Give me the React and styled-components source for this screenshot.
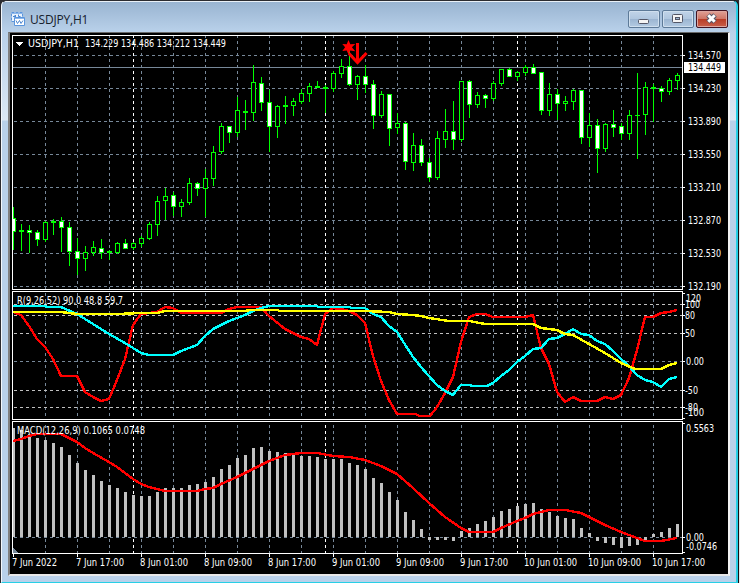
import React from "react";
import styled, { createGlobalStyle } from "styled-components";

const color = {
  grid: "#778899",
  level: "#c0c0c0",
  up: "#00ff00",
  red: "#ff0000",
  cyan: "#00ffff",
  yellow: "#ffff00",
  frame: "#b9d1ea",
};

const GlobalStyle = createGlobalStyle`
  * {
    box-sizing: border-box;
  }
  body {
    margin: 0;
    background: linear-gradient(90deg, #2b2b30 739px, #e4e8ec 739px);
    overflow: hidden;
  }
`;

const Window = styled.div`
  width: 737px;
  height: 583px;
  margin-left: 1px;
  display: flex;
  flex-direction: column;
  background: ${color.frame};
  border: solid;
  border-width: 1px 2px 1px 1px;
  border-color: #2b2b30 #27cfe6 #27cfe6 #f4f8fc;
  border-radius: 6px 6px 0 0;
  box-shadow: 1px 0 0 #101014;
  overflow: hidden;
`;

const TitleBar = styled.header`
  height: 31px;
  flex: none;
  display: flex;
  align-items: flex-start;
  padding: 9px 8px 0 9px;
  border-top: 1px solid #e9f0f7;
  background: linear-gradient(#99b4d1, #b9d1ea);
`;

const WindowTitle = styled.h1`
  flex: 1;
  margin: 0 0 0 4px;
  font: 400 12px/18px "Open Sans", "Noto Sans", sans-serif;
  letter-spacing: -0.2px;
  color: #16202c;
`;

const Buttons = styled.div`
  display: flex;
  gap: 2px;
  margin-top: -1px;
`;

const WindowButton = styled.button`
  width: 32px;
  height: 18px;
  padding: 0;
  display: flex;
  align-items: center;
  justify-content: center;
  border: 1px solid ${(p) => (p.$close ? "#431422" : "#5d7a98")};
  border-radius: 2px;
  box-shadow: inset 0 0 0 1px ${(p) => (p.$close ? "#dda69f" : "#cfdfee")};
  background: ${(p) =>
    p.$close
      ? "linear-gradient(#e0a196, #cf7767 48%, #b83c25 50%, #c9604b)"
      : "linear-gradient(#c1d4e8, #b0c7df 48%, #9bb5d1 50%, #b3cae2)"};
`;

const Body = styled.div`
  flex: 1;
  display: flex;
  padding: 0 6px 6px 6px;
  background: linear-gradient(
      #b9d1ea 0,
      #dce8f4 88px,
      #b9d1ea 89px,
      #b9d1ea 100%
    );
`;

const Client = styled.main`
  flex: 1;
  display: flex;
  flex-direction: column;
  border: solid;
  border-width: 1px 2px 2px 2px;
  border-color: #696969 #f4f4f4 #e8e8e8 #808080;
  background: #000;
`;

const Pane = styled.svg`
  display: block;
  flex: none;
  width: 718px;
  height: ${(p) => p.$height}px;
  overflow: visible;
  shape-rendering: crispEdges;
`;

const Label = styled.text`
  font: 10.5px "DejaVu Sans Condensed", "DejaVu Sans", sans-serif;
  font-stretch: condensed;
  fill: ${(p) => p.$fill || "#fff"};
`;

// high, body top, body bottom, low, kind (0 hollow, 1 filled)
const candles = [
  [207, 218, 231, 249, 1], [224, 230, 231, 250, 0], [225, 230, 232, 252, 1],
  [230, 232, 239, 245, 1], [221, 222, 239, 241, 0], [219, 221, 222, 234, 0],
  [217, 221, 227, 251, 1], [222, 227, 251, 265, 1], [238, 251, 258, 274, 1],
  [246, 252, 258, 270, 0], [241, 247, 252, 255, 0], [239, 248, 252, 258, 1],
  [250, 251, 252, 259, 0], [242, 243, 252, 253, 0], [239, 243, 248, 248, 1],
  [242, 243, 247, 249, 0], [236, 238, 243, 246, 0], [222, 224, 238, 239, 0],
  [196, 201, 224, 235, 0], [188, 196, 200, 219, 0], [192, 195, 206, 215, 1],
  [199, 202, 206, 216, 0], [178, 183, 202, 204, 0], [182, 183, 188, 195, 1],
  [169, 178, 188, 216, 0], [146, 152, 178, 185, 0], [123, 126, 151, 153, 0],
  [126, 126, 132, 142, 1], [97, 110, 132, 136, 0], [100, 111, 112, 129, 0],
  [65, 82, 112, 120, 0], [77, 83, 102, 110, 1], [90, 102, 126, 151, 1],
  [105, 106, 126, 137, 0], [96, 105, 106, 123, 0], [98, 101, 105, 115, 0],
  [89, 93, 101, 103, 0], [83, 86, 93, 101, 0], [81, 86, 87, 87, 0],
  [85, 87, 88, 112, 0], [71, 73, 88, 91, 0], [59, 66, 73, 77, 0],
  [50, 66, 84, 85, 1], [75, 76, 84, 99, 0], [65, 76, 84, 92, 1],
  [80, 84, 115, 128, 1], [91, 94, 115, 117, 0], [94, 94, 128, 145, 1],
  [113, 123, 127, 133, 0], [122, 123, 161, 169, 1], [133, 145, 162, 170, 0],
  [139, 145, 162, 165, 1], [158, 162, 177, 181, 1], [131, 138, 177, 179, 0],
  [109, 131, 139, 147, 0], [101, 131, 139, 149, 1], [81, 81, 139, 141, 0],
  [80, 81, 104, 117, 1], [92, 95, 104, 107, 0], [94, 95, 98, 107, 1],
  [81, 83, 98, 100, 0], [69, 69, 83, 85, 0], [68, 69, 76, 76, 1],
  [71, 72, 76, 80, 0], [65, 67, 72, 75, 0], [64, 67, 73, 73, 1],
  [72, 72, 110, 114, 1], [83, 94, 110, 115, 0], [89, 94, 103, 119, 1],
  [96, 101, 103, 110, 0], [89, 90, 101, 109, 0], [90, 90, 137, 143, 1],
  [113, 125, 137, 146, 0], [119, 125, 148, 172, 1], [123, 124, 148, 151, 0],
  [110, 124, 127, 136, 1], [123, 126, 133, 139, 1], [110, 115, 133, 139, 0],
  [73, 115, 115, 158, 0], [82, 87, 114, 134, 0], [84, 87, 88, 121, 0],
  [86, 88, 91, 101, 1], [78, 80, 91, 94, 0], [73, 75, 80, 89, 0],
];

const macd = [
  428, 430, 434, 438, 440, 443, 447, 455, 463, 470, 475, 481, 485, 488, 492,
  495, 496, 496, 492, 488, 488, 488, 485, 484, 482, 477, 469, 465, 458, 455,
  448, 447, 451, 452, 453, 454, 456, 456, 457, 459, 459, 459, 463, 465, 469,
  478, 483, 492, 500, 512, 520, 529, 540, 540, 540, 541, 531, 528, 524, 521,
  517, 511, 509, 506, 504, 503, 509, 512, 516, 518, 519, 528, 533, 541, 543,
  545, 548, 546, 545, 540, 534, 532, 528, 524,
];

const fast =
  "13,312 21,315 29,326 37,339 45,347 53,359 61,376 77,376 85,392 93,397 101,401 109,399 117,380 125,359 133,325 141,314 157,312 165,307 173,308 181,313 221,313 229,309 237,307 261,307 269,316 285,329 301,337 309,339 317,345 325,314 333,308 341,309 349,311 357,315 365,323 373,356 381,381 389,400 397,414 416,414 419,416 430,416 437,407 445,393 453,377 461,342 469,317 477,314 485,314 493,317 525,317 533,315 541,348 549,364 557,392 565,402 573,397 581,401 597,401 605,397 613,399 621,395 629,378 637,350 645,317 653,317 661,313 669,312 677,310";
const middle =
  "13,306 45,306 47,307 61,307 77,314 93,324 109,334 125,343 133,348 141,353 149,355 173,355 181,351 197,345 205,336 213,329 229,321 245,315 253,311 261,308 269,306 316,306 319,307 349,307 352,308 365,308 373,314 381,317 389,326 397,332 413,357 421,367 437,385 445,391 453,395 461,385 469,385 473,386 487,386 493,383 501,376 509,370 517,362 525,356 533,349 541,348 549,339 557,338 565,334 573,329 581,334 589,335 597,341 605,344 613,351 621,359 629,366 637,375 645,380 653,382 661,387 669,379 677,377";
const slow =
  "13,312 61,312 77,314 117,314 141,313 157,313 165,311 245,311 250,310 277,310 280,311 365,311 389,312 397,314 413,315 421,316 429,318 449,321 469,321 485,324 533,324 541,328 557,330 565,334 573,335 589,344 605,353 621,363 635,369 661,369 669,365 677,363";
const signal =
  "13,441 21,439 29,436 37,434 61,434 69,438 77,442 85,448 93,453 109,462 117,467 125,473 133,479 141,484 149,487 157,489 165,491 197,491 205,489 213,488 221,484 237,477 245,473 269,461 285,455 301,453 317,453 333,456 349,457 365,460 381,466 397,474 413,488 429,503 445,517 461,528 469,532 493,532 501,528 517,521 525,518 533,514 541,512 549,510 565,510 581,513 589,517 605,525 621,532 637,538 645,541 661,541 677,538";

const columns = Array.from({ length: 20 }, (_, i) => 45 + i * 32);
const days = [133, 325, 517];
const dates = [
  ["7 Jun 2022", 12, 45], ["7 Jun 17:00", 76, 48], ["8 Jun 01:00", 140, 48],
  ["8 Jun 09:00", 204, 48], ["8 Jun 17:00", 268, 48], ["9 Jun 01:00", 332, 48],
  ["9 Jun 09:00", 396, 48], ["9 Jun 17:00", 460, 48], ["10 Jun 01:00", 524, 53],
  ["10 Jun 09:00", 588, 53], ["10 Jun 17:00", 652, 53],
];

const Text = ({ x, y, width, fill, children }) => (
  <Label x={x} y={y} textLength={width} lengthAdjust="spacingAndGlyphs" $fill={fill}>
    {children}
  </Label>
);

const Grid = ({ start, bottom }) => (
  <g strokeDasharray="3 3">
    {columns.map((x) => (
      <path key={x} d={`M${x + 0.5} ${start}V${bottom}`} stroke={color.grid} />
    ))}
    {days.map((x) => (
      <path key={x} d={`M${x + 0.5} ${start}V${bottom}`} stroke="#fff" />
    ))}
  </g>
);

const Level = ({ y, stroke = color.grid }) => (
  <path d={`M14 ${y + 0.5}H682`} stroke={stroke} strokeDasharray="3 3" />
);

const Tick = ({ y }) => <rect x="683" y={y} width="2" height="1" fill="#fff" />;

const Border = ({ y, height }) => (
  <rect x="12.5" y={y + 0.5} width="670" height={height - 1} fill="none" stroke="#fff" />
);

const Line = ({ points, stroke }) => (
  <polyline points={points} fill="none" stroke={stroke} strokeWidth="2.4" strokeLinejoin="round" />
);

const Candle = ({ x, data: [high, top, bottom, low, filled] }) => {
  const thin = bottom - top < 2;
  return (
    <g>
      <rect x={x} y={high} width="1" height={low - high + 1} fill={color.up} />
      <rect x={x - 2} y={top} width="5" height={bottom - top + 1} fill={color.up} />
      {!thin && (
        <rect
          x={x - 1}
          y={top + 1}
          width="3"
          height={bottom - top - 1}
          fill={filled ? "#fff" : "#000"}
        />
      )}
    </g>
  );
};

const PricePane = () => (
  <Pane $height={257} viewBox="10 33 718 257">
    <Grid start={35} bottom={289} />
    {["134.570", "134.230", "133.890", "133.550", "133.210", "132.870", "132.530", "132.190"].map(
      (price, i) => (
        <g key={price}>
          <Level y={55 + i * 33} />
          <Tick y={55 + i * 33} />
          <Text x={688} y={59 + i * 33} width={33}>{price}</Text>
        </g>
      )
    )}
    <rect x="13" y="67" width="669" height="1" fill={color.grid} />
    <svg x="12" y="35" width="671" height="255" viewBox="12 35 671 255">
      {candles.map((data, i) => (
        <Candle key={i} x={13 + i * 8} data={data} />
      ))}
    </svg>
    <g shapeRendering="auto" fill={color.red}>
      <path d="M348.5 40l1.8 4.2 5-.2-3.4 3.2 3.4 4-5-.8-1.8 4-1.8-4-4.4.6 2.8-3.8-2.8-3.2 4.4.2z" />
      <path
        d="M357.5 43V62M349 53.5L357.5 62.5L366.5 53"
        fill="none"
        stroke={color.red}
        strokeWidth="3"
      />
    </g>
    <path d="M16 42h7l-3.5 4z" fill="#fff" />
    <Text x={28} y={47} width={51}>USDJPY,H1</Text>
    <Text x={85} y={47} width={141}>134.229 134.486 134.212 134.449</Text>
    <Border y={35} height={255} />
    <rect x="684" y="62" width="41" height="11" fill="#fff" />
    <Text x={688} y={71} width={33} fill="#000">134.449</Text>
  </Pane>
);

const RangePane = () => (
  <Pane $height={130} viewBox="10 290 718 130">
    <Grid start={293} bottom={419} />
    {[304, 315, 333, 390, 407].map((y) => (
      <Level key={y} y={y} stroke={color.level} />
    ))}
    <Level y={361} />
    {[293, 304, 315, 333, 361, 390, 407, 418].map((y) => (
      <Tick key={y} y={y} />
    ))}
    <Line points={fast} stroke={color.red} />
    <Line points={middle} stroke={color.cyan} />
    <Line points={slow} stroke={color.yellow} />
    <Text x={17} y={304} width={106}>R(9,26,52) 90.0 48.8 59.7</Text>
    <Border y={291} height={129} />
    <Text x={686} y={302} width={15}>120</Text>
    <Text x={685} y={308} width={15}>100</Text>
    <Text x={685} y={319} width={10}>80</Text>
    <Text x={685} y={337} width={10}>50</Text>
    <Text x={686} y={365} width={18}>0.00</Text>
    <Text x={685} y={394} width={13}>-50</Text>
    <Text x={685} y={411} width={13}>-80</Text>
    <Text x={685} y={416} width={19}>-100</Text>
  </Pane>
);

const MacdPane = () => (
  <Pane $height={154} viewBox="10 420 718 154">
    <Grid start={425} bottom={553} />
    <Level y={537} />
    {macd.map((y, i) => (
      <rect
        key={i}
        x={i ? 12 + i * 8 : 13}
        y={Math.min(y, 537)}
        width={i ? 3 : 2}
        height={Math.abs(537 - y)}
        fill={color.level}
      />
    ))}
    <Line points={signal} stroke={color.red} />
    <path d="M13 548l5 5h-5z" fill={color.grid} />
    <Text x={17} y={434} width={128}>MACD(12,26,9) 0.1065 0.0748</Text>
    <Border y={421} height={133} />
    {[423, 537, 552].map((y) => (
      <Tick key={y} y={y} />
    ))}
    <Text x={686} y={432} width={28}>0.5563</Text>
    <Text x={686} y={541} width={18}>0.00</Text>
    <Text x={686} y={550} width={31}>-0.0746</Text>
    {dates.map(([label, x, width]) => (
      <g key={label}>
        <rect x={x + 1} y="554" width="1" height="3" fill="#fff" />
        <Text x={x} y={566} width={width}>{label}</Text>
      </g>
    ))}
  </Pane>
);

const ChartIcon = () => (
  <svg width="15" height="16" viewBox="0 0 15 16" fill="none">
    <path d="M.5 1.500h11v9H.5z" fill="#eaf3fd" stroke="#5b95dc" strokeDasharray="3 1" />
    <path d="M1 2.500h10" stroke="#8db8ec" />
    <path d="M2 5.500h2V4M4.500 4v3M7.500 3.500v2h2" stroke="#4b86d0" />
    <path d="M3.500 6.500h10v8h-10z" fill="#fff" stroke="#5b95dc" />
    <path d="M4 7.500h9" stroke="#8db8ec" />
    <path d="M5 9.500l1.500 3L8.500 9.500l1.500 3L12 9.500" stroke="#4b86d0" />
  </svg>
);

export default function App() {
  return (
    <>
      <GlobalStyle />
      <Window>
        <TitleBar>
          <ChartIcon />
          <WindowTitle>USDJPY,H1</WindowTitle>
          <Buttons>
            <WindowButton aria-label="Minimize">
              <svg width="12" height="12">
                <rect x=".5" y="6.500" width="10" height="4" rx="1" fill="#f4f4f4" stroke="#535666" />
              </svg>
            </WindowButton>
            <WindowButton aria-label="Maximize">
              <svg width="12" height="12" fill="none" stroke="#535666">
                <rect x=".5" y="1.500" width="10" height="8" rx="1" fill="#f4f4f4" />
                <rect x="3.500" y="4.500" width="4" height="2" fill="#9bb5d1" />
              </svg>
            </WindowButton>
            <WindowButton $close aria-label="Close">
              <svg width="14" height="12">
                <path d="M3 2l7 7M10 2l-7 7" stroke="#535666" strokeWidth="5" />
                <path d="M3.300 2.300l6.400 6.400M9.700 2.300l-6.400 6.400" stroke="#fff" strokeWidth="3" />
              </svg>
            </WindowButton>
          </Buttons>
        </TitleBar>
        <Body>
          <Client>
            <PricePane />
            <RangePane />
            <MacdPane />
          </Client>
        </Body>
      </Window>
    </>
  );
}
